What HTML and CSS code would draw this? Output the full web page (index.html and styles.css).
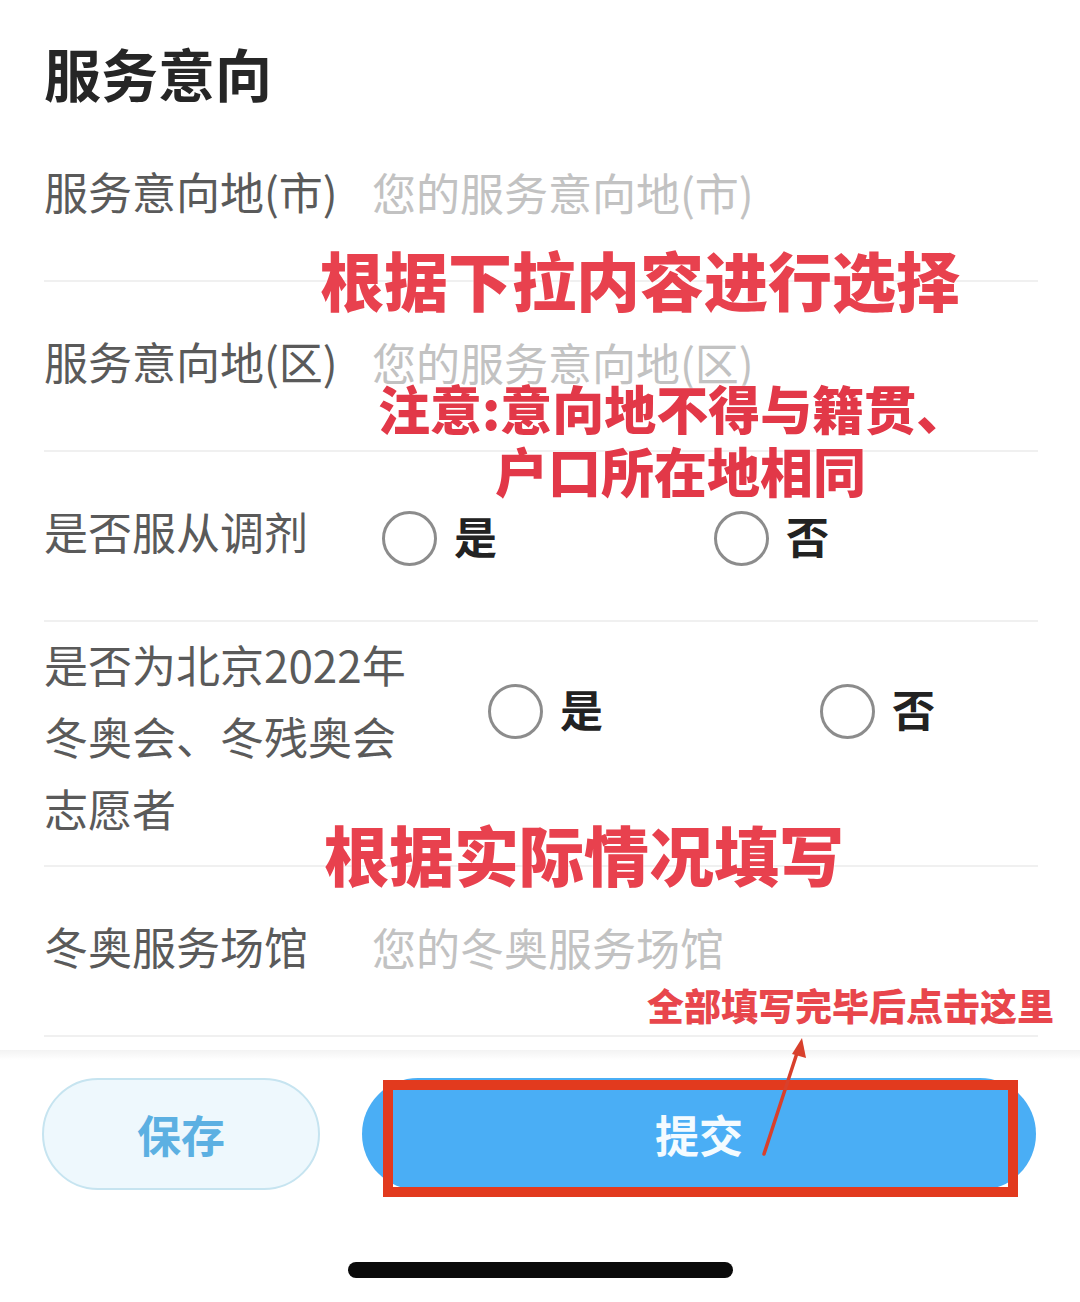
FILE: index.html
```html
<!DOCTYPE html>
<html lang="zh-CN">
<head>
<meta charset="utf-8">
<title>服务意向</title>
<link rel="stylesheet" href="styles.css">
</head>
<body>
<div class="screen">
  <main class="page">
    <h1 class="title">服务意向</h1>

    <div class="row">
      <div class="label">服务意向地(市)</div>
      <div class="placeholder">您的服务意向地(市)</div>
    </div>

    <div class="row">
      <div class="label">服务意向地(区)</div>
      <div class="placeholder">您的服务意向地(区)</div>
    </div>

    <div class="row">
      <div class="label label-radio">是否服从调剂</div>
      <div class="radios">
        <div class="option"><span class="circle"></span><span class="opt-text">是</span></div>
        <div class="option"><span class="circle"></span><span class="opt-text">否</span></div>
      </div>
    </div>

    <div class="row row-tall">
      <div class="label label-wide">是否为北京2022年<br>冬奥会、冬残奥会<br>志愿者</div>
      <div class="radios radios-top">
        <div class="option"><span class="circle"></span><span class="opt-text">是</span></div>
        <div class="option"><span class="circle"></span><span class="opt-text">否</span></div>
      </div>
    </div>

    <div class="row">
      <div class="label">冬奥服务场馆</div>
      <div class="placeholder">您的冬奥服务场馆</div>
    </div>
  </main>

  <footer class="footer">
    <div class="buttons">
      <button class="btn btn-save">保存</button>
      <button class="btn btn-submit">提交</button>
    </div>
    <div class="home-bar"></div>
  </footer>

  <div class="note note-1">根据下拉内容进行选择</div>
  <div class="note note-2">注意:意向地不得与籍贯、</div>
  <div class="note note-3">户口所在地相同</div>
  <div class="note note-4">根据实际情况填写</div>
  <div class="note note-5">全部填写完毕后点击这里</div>
  <div class="red-box"></div>
  <svg class="arrow" width="80" height="130" viewBox="0 0 80 130">
    <line x1="12" y1="122" x2="46" y2="18" stroke="#d8402c" stroke-width="3.5" stroke-linecap="round"/>
    <polygon points="50,6 54,26 40,22" fill="#d8402c"/>
  </svg>
</div>
</body>
</html>
```

FILE: styles.css
```css
* { box-sizing: border-box; }

html, body {
  margin: 0;
  padding: 0;
  background: #ffffff;
}

body {
  font-family: "Noto Sans CJK SC", "Noto Sans", sans-serif;
  color: #555555;
}

.screen {
  position: relative;
  width: 1080px;
  height: 1302px;
  overflow: hidden;
  background: #ffffff;
}

.page {
  padding: 0 42px 0 44px;
}

.title {
  margin: 0;
  padding-top: 32px;
  height: 112px;
  line-height: 80px;
  font-size: 57px;
  font-weight: 700;
  color: #262626;
}

.row {
  display: flex;
  align-items: center;
  height: 170px;
  border-bottom: 2px solid #f0f0f0;
}

.row-tall {
  height: 245px;
  align-items: flex-start;
  padding-top: 12px;
}

.label {
  flex: 0 0 328px;
  font-size: 44px;
  line-height: 72px;
  color: #5a5a5a;
  margin-top: -10px;
}

.label-radio { flex-basis: 338px; }

.label-wide {
  flex-basis: 444px;
  margin-top: -6px;
}

.placeholder {
  font-size: 44px;
  line-height: 72px;
  color: #c2c2c2;
  margin-top: -8px;
}

.radios {
  display: flex;
  margin-top: 4px;
}

.radios-top { margin-top: 50px; }

.option {
  display: flex;
  align-items: center;
  width: 332px;
}

.circle {
  width: 55px;
  height: 55px;
  border: 3px solid #8c8c8c;
  border-radius: 50%;
  flex: 0 0 auto;
}

.opt-text {
  margin-left: 17px;
  font-size: 43px;
  font-weight: 700;
  color: #222222;
  line-height: 55px;
  margin-top: -6px;
}

.footer {
  position: absolute;
  left: 0;
  right: 0;
  bottom: 0;
  height: 252px;
  background: linear-gradient(#f3f3f3 0, #ffffff 10px);
}

.buttons {
  display: flex;
  gap: 42px;
  padding: 28px 44px 0 42px;
}

.btn {
  height: 112px;
  border-radius: 56px;
  font-family: "Noto Sans CJK SC", "Noto Sans", sans-serif;
  font-size: 44px;
  font-weight: 700;
  padding: 0;
}

.btn-save {
  width: 278px;
  background: #eef8fd;
  border: 2px solid #c6e4f0;
  color: #5cb0e2;
}

.btn-submit {
  width: 674px;
  background: #4aaef5;
  border: none;
  color: #f4fbff;
}

.home-bar {
  width: 385px;
  height: 16px;
  border-radius: 8px;
  background: #0a0a0a;
  margin: 72px 0 0 348px;
}

.note {
  position: absolute;
  font-family: "Noto Sans CJK SC", "Noto Sans", sans-serif;
  font-weight: 900;
  line-height: 1;
  color: #e8414e;
  white-space: nowrap;
  text-shadow: 0 0 3px rgba(255, 255, 255, 0.9);
}

.note-1 { left: 320px; top: 246px; font-size: 64px; }
.note-2 { left: 378px; top: 382px; font-size: 52px; color: #e23848; }
.note-3 { left: 495px; top: 444px; font-size: 53px; color: #e23848; }
.note-4 { left: 324px; top: 821px; font-size: 65px; }
.note-5 { left: 647px; top: 987px; font-size: 37px; color: #e8464c; }

.red-box {
  position: absolute;
  left: 383px;
  top: 1080px;
  width: 635px;
  height: 117px;
  border: 10px solid #e23a1e;
}

.arrow {
  position: absolute;
  left: 752px;
  top: 1032px;
}
```
